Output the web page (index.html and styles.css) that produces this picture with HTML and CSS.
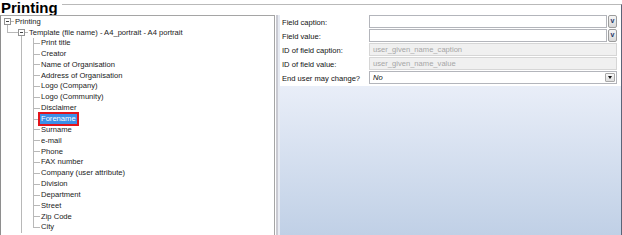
FILE: index.html
```html
<!DOCTYPE html>
<html lang="en">
<head>
    <meta charset="UTF-8">
    <title>Printing</title>
    <link rel="stylesheet" href="styles.css">
</head>
<body>

    <!-- Header -->

    <div class="header">
        <h1>Printing</h1>
        <div class="rule"></div>
    </div>

    <div class="main">

        <!-- Tree -->

        <div class="tree">
            <div class="row root"><span class="exp"></span><span class="dash"></span>Printing</div>
            <div class="row branch"><span class="exp"></span><span class="dash"></span>Template (file name) - A4_portrait - A4 portrait</div>
            <div class="row leaf"><span class="txt">Print title</span></div>
            <div class="row leaf"><span class="txt">Creator</span></div>
            <div class="row leaf"><span class="txt">Name of Organisation</span></div>
            <div class="row leaf"><span class="txt">Address of Organisation</span></div>
            <div class="row leaf"><span class="txt">Logo (Company)</span></div>
            <div class="row leaf"><span class="txt">Logo (Community)</span></div>
            <div class="row leaf"><span class="txt">Disclaimer</span></div>
            <div class="row leaf"><span class="txt selected">Forename</span></div>
            <div class="row leaf"><span class="txt">Surname</span></div>
            <div class="row leaf"><span class="txt">e-mail</span></div>
            <div class="row leaf"><span class="txt">Phone</span></div>
            <div class="row leaf"><span class="txt">FAX number</span></div>
            <div class="row leaf"><span class="txt">Company (user attribute)</span></div>
            <div class="row leaf"><span class="txt">Division</span></div>
            <div class="row leaf"><span class="txt">Department</span></div>
            <div class="row leaf"><span class="txt">Street</span></div>
            <div class="row leaf"><span class="txt">Zip Code</span></div>
            <div class="row leaf last"><span class="txt">City</span></div>
        </div>

        <div class="splitter"></div>

        <!-- Properties -->

        <div class="props">
            <div class="fields">
                <div class="field">
                    <label>Field caption:</label>
                    <div class="box"></div>
                    <div class="drop">v</div>
                </div>
                <div class="field">
                    <label>Field value:</label>
                    <div class="box"></div>
                    <div class="drop">v</div>
                </div>
                <div class="field">
                    <label>ID of field caption:</label>
                    <div class="box wide disabled">user_given_name_caption</div>
                </div>
                <div class="field">
                    <label>ID of field value:</label>
                    <div class="box wide disabled">user_given_name_value</div>
                </div>
                <div class="field combo-row">
                    <label>End user may change?</label>
                    <div class="box wide combo"><i>No</i><span class="arrow"></span></div>
                </div>
            </div>
            <div class="fill"></div>
        </div>

    </div>

</body>
</html>
```

FILE: styles.css
```css
*{
    margin: 0;
    padding: 0;
    box-sizing: border-box;
}

body{
    width: 622px;
    height: 235px;
    overflow: hidden;
    background: #fff;
    font-family: "Liberation Sans", Arial, sans-serif;
    font-size: 7.6px;
    color: #1a1a1a;
}

.header{
    display: flex;
    height: 15px;
}

h1{
    font-size: 15px;
    line-height: 16px;
    height: 15px;
    padding-left: 1px;
    color: #000;
}

.rule{
    flex: 1;
    margin-top: 4px;
    margin-left: 4px;
    border-top: 1px solid #b9b9b9;
    border-right: 1px solid #5b6478;
}

.main{
    display: flex;
    height: 220px;
}

/* tree */

.tree{
    --ln: #b8b8b8;
    width: 274px;
    border-top: 1px solid #a5a5a5;
    border-left: 1px solid #8e8e8e;
    background: #fff;
}

.row{
    display: flex;
    align-items: center;
    height: 10.85px;
    white-space: nowrap;
}

.exp{
    width: 7px;
    height: 7px;
    border: 1px solid #939393;
    background: linear-gradient(#444, #444) center / 3px 1px no-repeat, #fff;
}

.dash{
    width: 3px;
    height: 1px;
    margin-right: 1px;
    background: var(--ln);
}

.root{
    padding-left: 3px;
    background: linear-gradient(var(--ln), var(--ln)) 6px 9px / 1px 2px no-repeat;
}

.branch{
    padding-left: 17px;
    background:
        linear-gradient(var(--ln), var(--ln)) 6px 0 / 1px 5px no-repeat,
        linear-gradient(var(--ln), var(--ln)) 6px 5px / 11px 1px no-repeat,
        linear-gradient(var(--ln), var(--ln)) 20px 9px / 1px 2px no-repeat;
}

.leaf{
    padding-left: 39px;
    background:
        linear-gradient(var(--ln), var(--ln)) 20px 0 / 1px 100% no-repeat,
        linear-gradient(var(--ln), var(--ln)) 32px 0 / 1px 100% no-repeat,
        linear-gradient(var(--ln), var(--ln)) 32px 5px / 7px 1px no-repeat;
}

.leaf.last{
    background:
        linear-gradient(var(--ln), var(--ln)) 20px 0 / 1px 100% no-repeat,
        linear-gradient(var(--ln), var(--ln)) 32px 0 / 1px 6px no-repeat,
        linear-gradient(var(--ln), var(--ln)) 32px 5px / 7px 1px no-repeat;
}

.txt{
    padding: 0 1px;
    height: 10px;
    line-height: 10px;
}

.selected{
    background: #3b8fe8;
    color: #fff;
    outline: 2px solid #e3141b;
}

.splitter{
    width: 6px;
    background: linear-gradient(to right, #a5a5a5 0 1px, #fff 1px 2px, #c9cad2 2px 4px, #e7ebf3 4px 6px);
}

/* properties */

.props{
    flex: 1;
    display: flex;
    flex-direction: column;
    border-right: 1px solid #5b6478;
}

.fields{
    background: #fff;
    padding: 0 0 1px 2px;
}

.field{
    display: flex;
    align-items: center;
    height: 13px;
    margin-bottom: 1px;
}

.combo-row{
    margin-top: 1px;
}

label{
    width: 87px;
    padding-top: 1px;
    color: #111;
}

.box{
    width: 238px;
    height: 13px;
    border: 1px solid #b3b5bb;
    background: #fff;
    padding-left: 3px;
    line-height: 11px;
    display: flex;
    align-items: center;
}

.box.wide{
    width: 248px;
}

.disabled{
    background: #f0f0f0;
    border-color: #d6d6d6;
    color: #a6a6a6;
}

.combo{
    justify-content: space-between;
    padding-right: 1px;
}

.combo i{
    color: #111;
}

.arrow{
    width: 10px;
    height: 9px;
    border: 1px solid #a9a9a9;
    border-radius: 1px;
    background: linear-gradient(#f7f7f7, #dedede);
    display: flex;
    align-items: center;
    justify-content: center;
}

.arrow::after{
    content: "";
    border-left: 2.5px solid transparent;
    border-right: 2.5px solid transparent;
    border-top: 3px solid #111;
}

.drop{
    width: 9px;
    height: 13px;
    margin-left: 1px;
    border: 1px solid #9c9c9c;
    border-radius: 2px;
    background: linear-gradient(#f6f6f6, #d9d9d9);
    color: #1d3566;
    font-weight: bold;
    font-size: 7px;
    line-height: 10px;
    text-align: center;
}

.fill{
    flex: 1;
    background: linear-gradient(#e9eef8, #c0d0e6);
}
```
